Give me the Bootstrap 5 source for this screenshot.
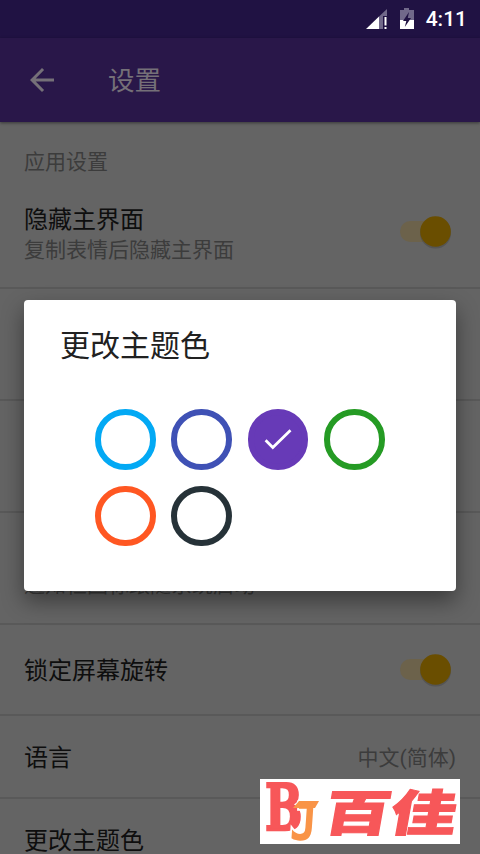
<!DOCTYPE html>
<html lang="zh-CN">
<head>
<meta charset="utf-8">
<meta name="viewport" content="width=device-width, initial-scale=1">
<title>设置</title>
<link href="https://cdn.jsdelivr.net/npm/bootstrap@5.3.0/dist/css/bootstrap.min.css" rel="stylesheet">
<style>
  body { font-family: Roboto, "Noto Sans CJK SC", sans-serif; background: #646464; }
  .screen { width: 480px; height: 854px; }
  .statusbar { height: 38px; background: #201243; padding: 2px 13px 0 0; font-size: 21px; font-weight: 500; }
  .appbar { height: 84px; background: #291749; color: #757078; padding-left: 24px; font-size: 26.5px; box-shadow: 0 1px 3px rgba(0,0,0,.45); }
  .appbar-title { margin-left: 48px; line-height: 36px; padding-top: 2px; }
  .section-label { height: 66px; padding: 25px 24px 0; font-size: 21px; line-height: 30px; color: #3c3c3c; }
  .setting { border-bottom: 2px solid #595959; padding: 2px 24px 0; color: #0e0e0e; font-size: 24px; line-height: 30px; }
  .setting small { font-size: 21px; line-height: 30px; color: #3c3c3c; }
  .h-first { height: 101px; padding-bottom: 8px; }
  .h-tall { height: 112px; }
  .h-mid { height: 91px; }
  .h-short { height: 83px; }
  .row-end { padding-bottom: 23px; }
  .toggle { width: 52px; height: 36px; margin: 0 4px 4px 0; }
  .h-first .toggle { margin-bottom: 8px; }
  .dialog { top: 300px; left: 24px; width: 432px; height: 291px; border-radius: 4px; box-shadow: 0 10px 22px rgba(0,0,0,.42); padding: 28px 36px 0; }
  .dialog h1 { font-size: 30px; line-height: 36px; font-weight: 400; color: #212121; margin: 0 0 45px; }
  .swatches { grid-template-columns: repeat(4, 61px); column-gap: 15.4px; row-gap: 16px; margin-left: 35px; }
  .swatch { width: 60.5px; height: 60.5px; border: 6px solid; }
  .c-blue { border-color: #03a9f4; } .c-indigo { border-color: #3f51b5; }
  .c-purple { border-color: #673ab7; background: #673ab7; }
  .c-green { border-color: #259b24; } .c-orange { border-color: #ff5722; } .c-dark { border-color: #263238; }
  .watermark { left: 260px; top: 779px; width: 200px; height: 65px; overflow: visible; }
</style>
</head>
<body>
<div class="screen position-relative overflow-hidden d-flex flex-column">
  <div class="statusbar d-flex align-items-center justify-content-end text-white flex-shrink-0">
    <svg width="22" height="22" viewBox="0 0 22 22"><path d="M0 20 13 7.5V20Z" fill="#fff"/><path d="M13 7.5 21 0V7H17V20H13Z" fill="#71698a"/><path d="M18.5 8h2v8.5h-2zM18.5 18h2v2h-2z" fill="#fff"/></svg>
    <svg class="ms-2 me-2" width="22" height="24" viewBox="0 0 22 24"><path d="M4 2h4V0h5v2h5v10H4Z" fill="#71698a"/><path d="M4 12h14v9H4Z" fill="#fff"/><path d="M13 4 7 13h3.3l-1.5 6L15 10h-3.2Z" fill="#201243"/></svg>
    <span>4:11</span>
  </div>
  <header class="appbar d-flex align-items-center flex-shrink-0 position-relative">
    <svg width="36" height="36" viewBox="0 0 24 24" fill="currentColor"><path d="M20 11H7.8l5.6-5.6L12 4l-8 8 8 8 1.4-1.4L7.8 13H20Z"/></svg>
    <span class="appbar-title">设置</span>
  </header>
  <main class="flex-shrink-0">
    <div class="section-label">应用设置</div>
    <div class="setting h-first d-flex align-items-center justify-content-between">
      <div class="d-flex flex-column"><span>隐藏主界面</span><small>复制表情后隐藏主界面</small></div>
      <svg class="toggle" viewBox="0 0 52 36"><rect x="0" y="8" width="48" height="21" rx="10.5" fill="#6c624b"/><circle cx="35.5" cy="20" r="15.5" fill="#4b4b4b" opacity=".6"/><circle cx="35.5" cy="18.5" r="15.3" fill="#6a4e00"/></svg>
    </div>
    <div class="setting h-tall"></div>
    <div class="setting h-tall"></div>
    <div class="setting h-tall row-end d-flex align-items-end"><small>通知栏图标跟随系统启动</small></div>
    <div class="setting h-mid d-flex align-items-center justify-content-between">
      <span>锁定屏幕旋转</span>
      <svg class="toggle" viewBox="0 0 52 36"><rect x="0" y="8" width="48" height="21" rx="10.5" fill="#6c624b"/><circle cx="35.5" cy="20" r="15.5" fill="#4b4b4b" opacity=".6"/><circle cx="35.5" cy="18.5" r="15.3" fill="#6a4e00"/></svg>
    </div>
    <div class="setting h-short d-flex align-items-center justify-content-between"><span>语言</span><small>中文(简体)</small></div>
    <div class="setting h-short d-flex align-items-center"><span>更改主题色</span></div>
  </main>

  <section class="dialog position-absolute bg-white" role="dialog">
    <h1>更改主题色</h1>
    <div class="swatches d-grid">
      <div class="swatch rounded-circle c-blue"></div>
      <div class="swatch rounded-circle c-indigo"></div>
      <div class="swatch rounded-circle c-purple d-flex align-items-center justify-content-center">
        <svg class="flex-shrink-0" width="36" height="36" viewBox="0 0 36 36" fill="none" stroke="#fff" stroke-width="2.8"><path d="m5.6 19.3 7.2 7.2L30.5 9.3"/></svg>
      </div>
      <div class="swatch rounded-circle c-green"></div>
      <div class="swatch rounded-circle c-orange"></div>
      <div class="swatch rounded-circle c-dark"></div>
    </div>
  </section>

  <svg class="watermark position-absolute bg-white" viewBox="0 0 200 65" font-weight="900">
    <g fill="#f75759" stroke="#f75759">
      <text transform="translate(5 51) scale(.82 1.16)" font-family="DejaVu Serif" font-size="54" stroke-width="2">B</text>
      <text transform="translate(62 52) skewX(-10) scale(1.32 .98)" font-family="Noto Sans CJK SC" font-size="50" stroke-width="1">百佳</text>
    </g>
    <text transform="translate(29 60.5) skewX(-4) scale(.86 1)" font-family="DejaVu Sans Mono" font-size="52" fill="#f99447" stroke="#fff" stroke-width="4" paint-order="stroke">J</text>
    <path d="M39 22H59L55 29H33Z" fill="#f99447"/>
  </svg>
</div>
<script src="https://cdn.jsdelivr.net/npm/bootstrap@5.3.0/dist/js/bootstrap.bundle.min.js"></script>
</body>
</html>
